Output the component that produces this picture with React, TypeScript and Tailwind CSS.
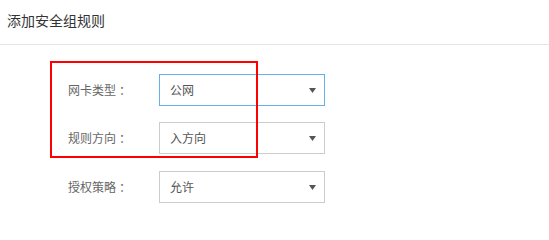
import React from 'react';

const rows = [
  { label: '网卡类型', value: '公网', focused: true },
  { label: '规则方向', value: '入方向', focused: false },
  { label: '授权策略', value: '允许', focused: false },
];

function Select({ value, focused }: { value: string; focused: boolean }) {
  return (
    <div
      className={`flex items-center justify-between w-[166px] h-[32px] pl-[10px] pr-[8px] bg-white border ${
        focused ? 'border-[#66afe9]' : 'border-[#cccccc]'
      }`}
    >
      <span className="text-[12px] text-[#555555]">{value}</span>
      <svg width="7" height="5" viewBox="0 0 7 5" className="mt-[1px]">
        <path d="M0 0 H7 L3.5 5 Z" fill="#555555" />
      </svg>
    </div>
  );
}

export default function App() {
  return (
    <div
      className="w-[549px] h-[212px] bg-white overflow-hidden"
      style={{ fontFamily: '"Noto Sans CJK SC", "Noto Sans", sans-serif' }}
    >
      <div className="h-[45px] border-b border-[#e5e5e5] flex items-center pl-[7px]">
        <span className="text-[14px] text-[#333333] -mt-[4px]">添加安全组规则</span>
      </div>
      <div className="relative pt-[29px] pl-[68px]">
        <div className="absolute left-[50px] top-[16px] w-[208px] h-[97px] border-2 border-[#ff0000] pointer-events-none" />
        <div className="flex flex-col">
          {rows.map((r, i) => (
            <div
              key={r.label}
              className={`flex items-center ${i === 1 ? 'mt-[16px]' : ''} ${i === 2 ? 'mt-[17px]' : ''}`}
            >
              <span className="w-[91px] text-[12px] text-[#666666]">
                {r.label}
                <span className="ml-[3px]">：</span>
              </span>
              <Select value={r.value} focused={r.focused} />
            </div>
          ))}
        </div>
      </div>
    </div>
  );
}
